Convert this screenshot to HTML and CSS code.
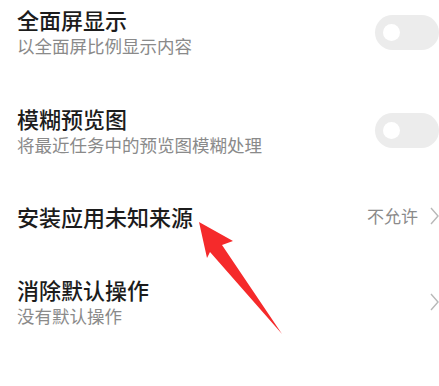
FILE: index.html
```html
<!DOCTYPE html>
<html lang="zh-CN">
<head>
<meta charset="utf-8">
<link rel="stylesheet" href="styles.css">
</head>
<body>
<div class="page">
  <div class="list">
    <div class="row">
      <div class="text">
        <div class="title">全面屏显示</div>
        <div class="sub">以全面屏比例显示内容</div>
      </div>
      <div class="toggle"><span class="knob"></span></div>
    </div>
    <div class="row">
      <div class="text">
        <div class="title">模糊预览图</div>
        <div class="sub">将最近任务中的预览图模糊处理</div>
      </div>
      <div class="toggle"><span class="knob"></span></div>
    </div>
    <div class="row">
      <div class="text">
        <div class="title">安装应用未知来源</div>
      </div>
      <div class="value">不允许</div>
      <svg class="chev" width="9" height="18" viewBox="0 0 9 18"><polyline points="1,1 8,9 1,17" fill="none" stroke="#b8b8b8" stroke-width="1.4"/></svg>
    </div>
    <div class="row">
      <div class="text">
        <div class="title">消除默认操作</div>
        <div class="sub">没有默认操作</div>
      </div>
      <svg class="chev" width="9" height="18" viewBox="0 0 9 18"><polyline points="1,1 8,9 1,17" fill="none" stroke="#b8b8b8" stroke-width="1.4"/></svg>
    </div>
  </div>
  <svg class="arrow" width="439" height="386" viewBox="0 0 439 386">
    <polygon points="199,222 233,241 222,245 282,334 210,252 207,258" fill="#f52a2b"/>
  </svg>
</div>
</body>
</html>
```
FILE: styles.css
```css
html, body {
  margin: 0;
  padding: 0;
  background: #ffffff;
}
.page {
  position: relative;
  width: 439px;
  height: 386px;
  overflow: hidden;
  font-family: "Noto Sans CJK SC", "Noto Sans", sans-serif;
}
.list {
  display: flex;
  flex-direction: column;
  gap: 44.5px;
  padding: 5px 0 0 17px;
}
.row {
  display: flex;
  align-items: center;
}
.text {
  flex: 1;
}
.title {
  font-size: 22px;
  line-height: 28px;
  font-weight: 500;
  color: #1c1c1c;
}
.sub {
  font-size: 17.5px;
  line-height: 26px;
  color: #8a8a8a;
}
.toggle {
  width: 64px;
  height: 35px;
  border-radius: 17.5px;
  background: #ececec;
  display: flex;
  align-items: center;
  padding-left: 8px;
  box-sizing: border-box;
}
.knob {
  width: 17px;
  height: 17px;
  border-radius: 50%;
  background: #ffffff;
}
.value {
  font-size: 17px;
  line-height: 24px;
  color: #8a8a8a;
  margin-right: 12px;
}
.chev {
  display: block;
}
.arrow {
  position: absolute;
  left: 0;
  top: 0;
}
```
